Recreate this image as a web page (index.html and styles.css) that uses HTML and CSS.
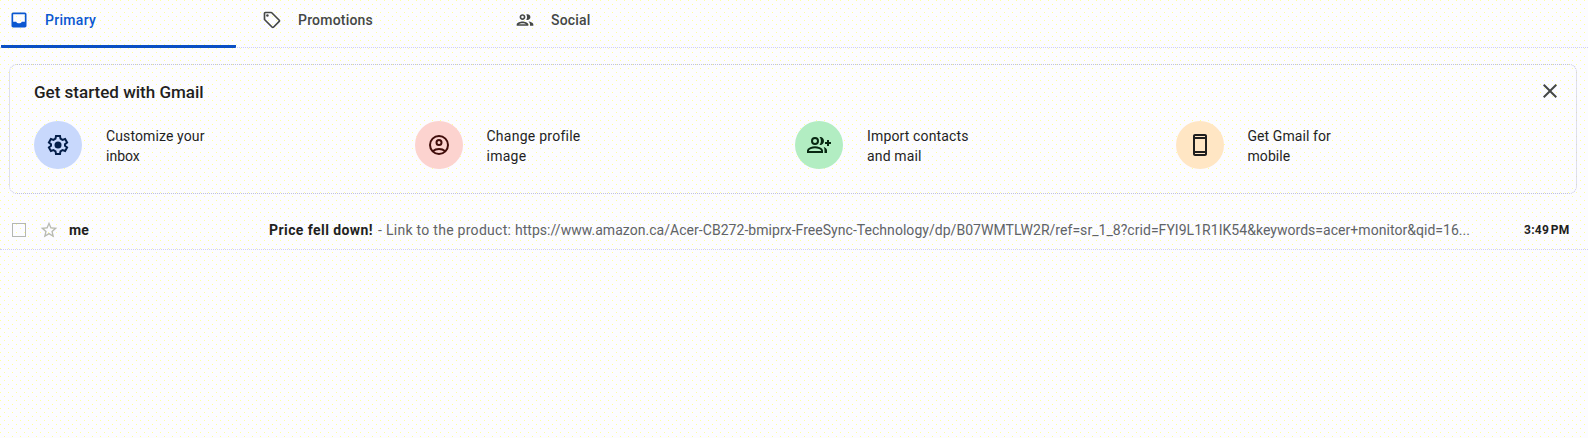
FILE: index.html
```html
<!DOCTYPE html>
<html lang="en">
<head>
<meta charset="utf-8">
<title>Inbox</title>
<link rel="stylesheet" href="styles.css">
</head>
<body>
<nav class="tabs">
  <a class="tab active"><svg class="icon" viewBox="0 0 24 24"><path fill-rule="evenodd" d="M19 3H5c-1.100 0-2 .9-2 2v14c0 1.100.9 2 2 2h14c1.100 0 2-.9 2-2V5c0-1.100-.9-2-2-2zm0 11h-3.600c-.7 1.200-1.900 2-3.400 2s-2.700-.8-3.400-2H5V5h14v9z"/></svg><span class="t-primary">Primary</span></a>
  <a class="tab"><svg class="icon" viewBox="0 0 24 24"><path fill-rule="evenodd" d="M21.410 11.580l-9-9C12.050 2.220 11.550 2 11 2H4c-1.100 0-2 .9-2 2v7c0 .55.220 1.050.590 1.420l9 9c.36.36.86.580 1.410.580s1.050-.22 1.410-.59l7-7c.37-.36.590-.86.590-1.410s-.23-1.060-.59-1.420zM13 20.010L4 11V4h7v-.010l9 9-7 7.020z"/><circle cx="6.500" cy="6.500" r="1.500"/></svg><span class="t-promo">Promotions</span></a>
  <a class="tab"><svg class="icon" viewBox="0 0 24 24"><path fill-rule="evenodd" d="M9 13.750c-2.340 0-7 1.170-7 3.500V19h14v-1.750c0-2.330-4.660-3.500-7-3.500zM4.340 17c.84-.58 2.870-1.250 4.660-1.250s3.820.67 4.660 1.250H4.340zM9 12c1.930 0 3.500-1.570 3.500-3.500S10.930 5 9 5 5.500 6.570 5.500 8.500 7.070 12 9 12zm0-5c.83 0 1.500.67 1.500 1.500S9.830 10 9 10s-1.500-.67-1.500-1.500S8.170 7 9 7zm7.040 6.810c1.160.84 1.960 1.960 1.960 3.440V19h4v-1.750c0-2.020-3.500-3.170-5.960-3.440zM15 12c1.930 0 3.500-1.570 3.500-3.500S16.930 5 15 5c-.54 0-1.040.130-1.500.35.63.89 1 1.980 1 3.150s-.37 2.260-1 3.150c.46.220.96.350 1.500.35z"/></svg><span class="t-social">Social</span></a>
</nav>
<section class="card">
  <header class="card-head">
    <h2>Get started with Gmail</h2>
    <svg class="close" viewBox="0 0 24 24"><path d="M19 6.410L17.590 5 12 10.590 6.410 5 5 6.410 10.590 12 5 17.590 6.410 19 12 13.410 17.590 19 19 17.590 13.410 12z"/></svg>
  </header>
  <div class="steps">
    <div class="step"><span class="disc blue"><svg viewBox="0 0 24 24"><path class="line" d="M10 3h4l.5 2.700 2 1.150L19.100 6l2 3.450L19 11.200v1.600l2.100 1.750-2 3.450-2.600-.85-2 1.150L14 21h-4l-.5-2.700-2-1.150L4.900 18l-2-3.450L5 12.800v-1.600L2.900 9.450 4.900 6l2.600.85 2-1.150z"/><circle cx="12" cy="12" r="3.500"/></svg></span><p><span class="t-custom">Customize your</span><br>inbox</p></div>
    <div class="step"><span class="disc pink"><svg viewBox="0 0 24 24"><g class="line"><circle cx="12" cy="12" r="9"/><circle cx="12" cy="9.500" r="2.500"/><path d="M5.800 18.200c3.400-2.900 9-2.900 12.400 0"/></g></svg></span><p class="t-change">Change profile<br>image</p></div>
    <div class="step"><span class="disc green"><svg viewBox="0 0 24 24"><g class="line"><circle cx="8" cy="8" r="3"/><path d="M1 19v-1.500c0-2 4.500-3.300 7-3.300s7 1.300 7 3.300V19zM21 7v6M18 10h6"/></g><path d="M12.500 4.100c2.500-.5 4.500 1.400 4.500 3.900s-2 4.400-4.500 3.900c1.900-2.300 1.900-5.500 0-7.800zM16.500 13.800c2 .8 3.500 1.900 3.500 3.700V20h-2.500v-2.500c0-1.500-.2-2.700-1-3.700z"/></svg></span><p class="t-import">Import contacts<br>and mail</p></div>
    <div class="step"><span class="disc cream"><svg viewBox="0 0 24 24"><path fill-rule="evenodd" d="M7 1h10c1.100 0 2 .9 2 2v18c0 1.100-.9 2-2 2H7c-1.100 0-2-.9-2-2V3c0-1.100.9-2 2-2zm0 2v1h10V3zm0 3v12h10V6zm0 14v1h10v-1z"/></svg></span><p class="t-mobile">Get Gmail for<br>mobile</p></div>
  </div>
</section>
<main class="mail">
  <span class="check"></span>
  <svg class="star" viewBox="0 0 24 24"><path d="M22 9.240l-7.190-.62L12 2 9.190 8.630 2 9.240l5.460 4.730L5.820 21 12 17.270 18.180 21l-1.630-7.030L22 9.240zM12 15.400l-3.760 2.270 1-4.280-3.320-2.880 4.380-.38L12 6.100l1.710 4.040 4.380.38-3.320 2.880 1 4.280L12 15.400z"/></svg>
  <b class="sender">me</b>
  <span class="subject">Price fell down!</span>
  <span class="snippet"><span class="lead">- Link to the product: </span>https://www.amazon.ca/Acer-CB272-bmiprx-FreeSync-Technology/dp/B07WMTLW2R/ref=sr_1_8?crid=FYI9L1R1IK54&amp;keywords=acer+monitor&amp;qid=16...</span>
  <time class="time">3:49&#8202;PM</time>
</main>
</body>
</html>
```
FILE: styles.css
```css
* { box-sizing: border-box; }
body {
  margin: 0;
  height: 438px;
  overflow: hidden;
  font: 14px/20px Roboto, sans-serif;
  color: #1f1f1f;
  background-color: #fcfcff;
  background-image:
    radial-gradient(circle at 0.5px 0.5px, #ffff99 0 0.6px, transparent 0.7px),
    radial-gradient(circle at 0.5px 0.5px, #ffff99 0 0.6px, transparent 0.7px);
  background-size: 8px 8px;
  background-position: 0 0, 4px 4px;
}
svg { display: block; fill: currentColor; }
span { white-space: nowrap; }
.tabs { display: flex; height: 48px; border-bottom: 1px dotted #cfcff5; }
.tab {
  display: flex;
  align-items: center;
  gap: 16px;
  width: 253px;
  height: 48px;
  padding: 0 0 8px 8px;
  font-weight: 500;
  letter-spacing: 0.2px;
  color: #444746;
}
.tab:first-child { width: 235px; margin: 0 18px 0 1px; }
.icon { width: 20px; height: 20px; }
.active { color: #0b57d0; border-bottom: 3px solid #0b4fc4; border-radius: 1px; padding-bottom: 5px; }
.t-primary { letter-spacing: 0.3px; }
.card {
  width: 1568px;
  height: 130px;
  margin: 16px 0 0 9px;
  padding: 14px 14px 0 24px;
  border: 1px dotted #c0c2dc;
  border-radius: 8px;
}
.card-head { display: flex; justify-content: space-between; height: 42px; }
.card-head h2 { margin: 0; font: 500 17px/26px Roboto, sans-serif; }
.close { width: 24px; height: 24px; color: #444746; }
.steps { display: grid; grid-template-columns: repeat(4, 380.5px); }
.step { display: flex; gap: 24px; }
.step p { margin: 5px 0 0; }
.t-custom { letter-spacing: 0.12px; }
.t-change { letter-spacing: 0.25px; }
.t-import { letter-spacing: 0.15px; }
.t-mobile { letter-spacing: 0.08px; }
.disc { display: flex; align-items: center; justify-content: center; width: 48px; height: 48px; border-radius: 50%; }
.disc svg { width: 24px; height: 24px; overflow: visible; }
.line { fill: none; stroke: currentColor; stroke-width: 2; }
.blue { background: #c8d8fc; color: #041e49; }
.pink { background: #fcd3cf; color: #410e0b; }
.green { background: #b2edc2; color: #072711; }
.cream { background: #ffe6c4; color: #1f1f1f; }
.mail { display: flex; align-items: center; height: 40px; margin-top: 16px; padding-left: 12px; border-bottom: 1px dotted #cfcff5; }
.check { width: 14px; height: 14px; border: 1.5px solid #b4b7b2; }
.star { width: 20px; height: 20px; margin-left: 13px; color: #b8bab2; }
.sender { width: 200px; margin-left: 10px; letter-spacing: 0.2px; }
.subject { width: 109px; font-weight: 700; letter-spacing: 0.43px; }
.snippet { width: 1146px; color: #5f6368; letter-spacing: 0.04px; }
.lead { letter-spacing: 0.28px; }
.time { font-size: 12px; font-weight: 700; letter-spacing: 0.3px; white-space: nowrap; }
```
